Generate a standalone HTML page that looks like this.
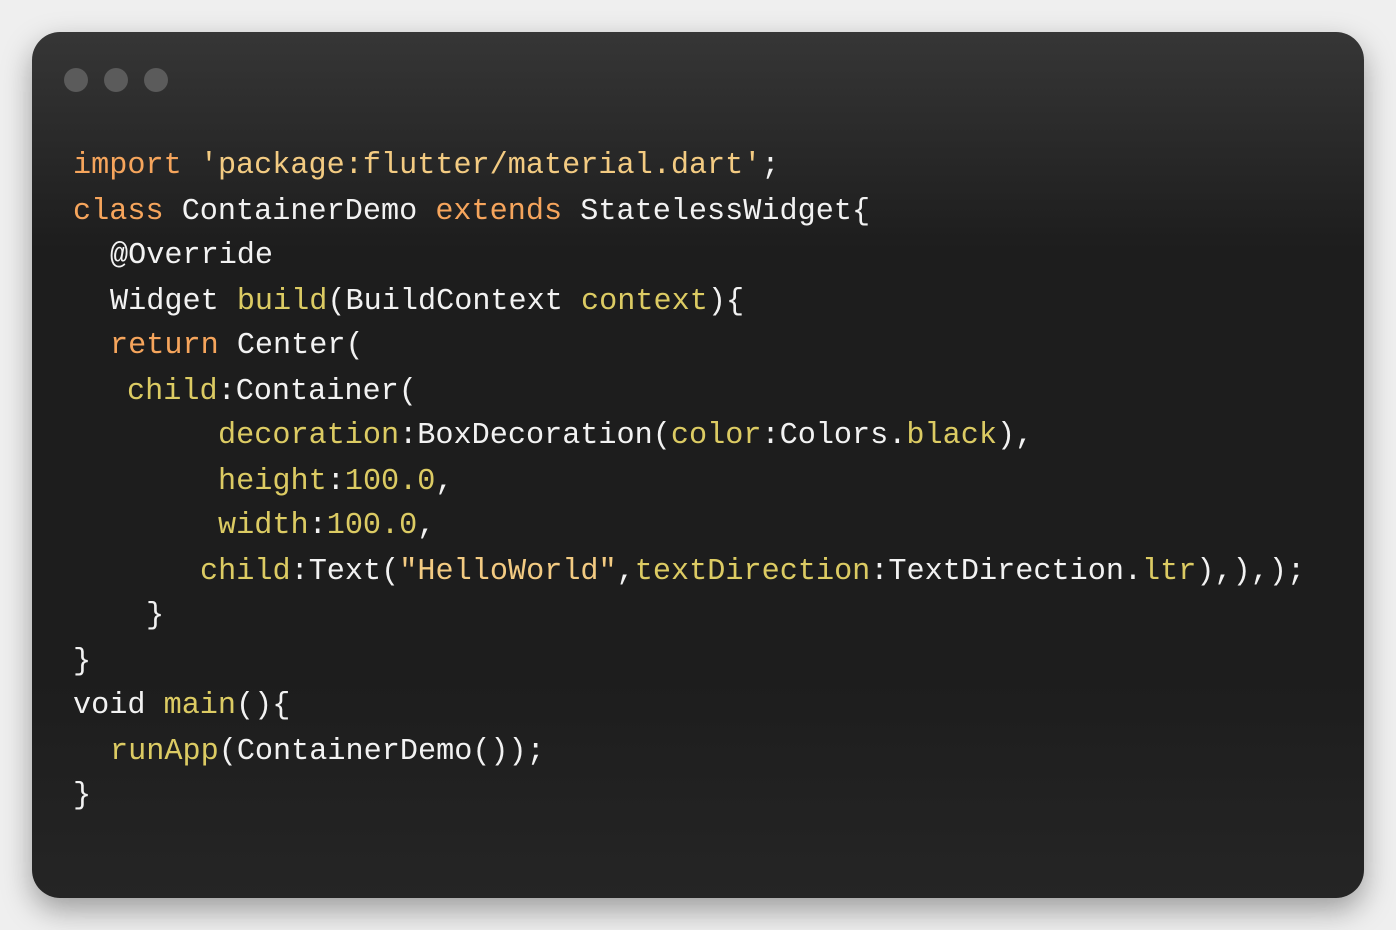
<!DOCTYPE html>
<html><head><style>
body{margin:0;width:1396px;height:930px;background:#efefef;position:relative;overflow:hidden;font-family:"Liberation Mono",monospace;}
.card{position:absolute;left:32px;top:32px;width:1332px;height:866px;border-radius:28px;background:linear-gradient(#363636,#1d1d1d 25%,#1d1d1d 75%,#252525);box-shadow:0 12px 30px rgba(0,0,0,.35);}
.d{position:absolute;top:68px;width:24px;height:24px;border-radius:50%;background:#5b5b5b;}
.l{position:absolute;font-size:30.2px;line-height:44px;white-space:pre;color:#f2f2f2;}
.k{color:#f6a55c}.s{color:#f3cb82}.y{color:#dccb63}
</style></head><body>
<div class="card"></div>
<div class="d" style="left:64px"></div><div class="d" style="left:104px"></div><div class="d" style="left:144px"></div>
<div class="l" style="left:73px;top:144px"><span class="k">import</span> <span class="s">'package:flutter/material.dart'</span>;</div>
<div class="l" style="left:73px;top:190px"><span class="k">class</span> ContainerDemo <span class="k">extends</span> StatelessWidget{</div>
<div class="l" style="left:110px;top:234px">@Override</div>
<div class="l" style="left:110px;top:280px">Widget <span class="y">build</span>(BuildContext <span class="y">context</span>){</div>
<div class="l" style="left:110px;top:324px"><span class="k">return</span> Center(</div>
<div class="l" style="left:127px;top:370px"><span class="y">child</span>:Container(</div>
<div class="l" style="left:218px;top:414px"><span class="y">decoration</span>:BoxDecoration(<span class="y">color</span>:Colors.<span class="y">black</span>),</div>
<div class="l" style="left:218px;top:460px"><span class="y">height</span>:<span class="y">100.0</span>,</div>
<div class="l" style="left:218px;top:504px"><span class="y">width</span>:<span class="y">100.0</span>,</div>
<div class="l" style="left:200px;top:550px"><span class="y">child</span>:Text(<span class="s">"HelloWorld"</span>,<span class="y">textDirection</span>:TextDirection.<span class="y">ltr</span>),),);</div>
<div class="l" style="left:146px;top:594px">}</div>
<div class="l" style="left:73px;top:640px">}</div>
<div class="l" style="left:73px;top:684px">void <span class="y">main</span>(){</div>
<div class="l" style="left:110px;top:730px"><span class="y">runApp</span>(ContainerDemo());</div>
<div class="l" style="left:73px;top:774px">}</div>
</body></html>
